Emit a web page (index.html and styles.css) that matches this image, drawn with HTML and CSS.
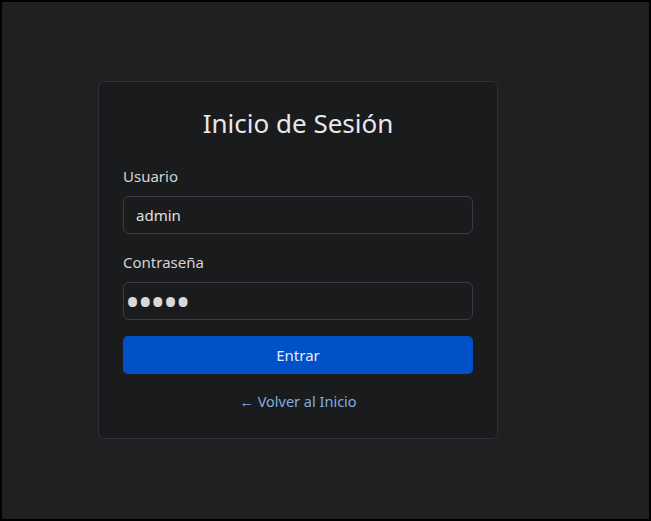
FILE: index.html
```html
<!DOCTYPE html>
<html lang="es">
<head>
  <meta charset="UTF-8" />
  <title>Inicio de Sesión</title>
  <link rel="stylesheet" href="styles.css">
</head>
<body>
  <div id="frame">
    <div class="login-card">
      <h1>Inicio de Sesión</h1>
      <form class="login-form" onsubmit="return false">
        <label for="user">Usuario</label>
        <input id="user" type="text" value="admin">
        <label for="pass">Contraseña</label>
        <input id="pass" type="password" value="admin">
        <button type="submit">Entrar</button>
      </form>
      <a class="back" href="#">&larr; Volver al Inicio</a>
    </div>
  </div>
</body>
</html>
```

FILE: styles.css
```css
body {
  margin: 0;
  background-color: #000;
  font-family: 'Noto Sans', 'Open Sans', sans-serif;
}
#frame {
  box-sizing: border-box;
  width: 100vw;
  height: 100vh;
  border: 2px solid #000;
  background-color: #1f2022;
  padding-top: 79px;
  padding-left: 96px;
}
.login-card {
  box-sizing: border-box;
  width: 400px;
  height: 358px;
  background-color: #1a1b1d;
  border: 1px solid #2f3033;
  border-radius: 6px;
  padding: 22px 24px 0;
  color: #dcdcdc;
}
h1 {
  margin: 0 0 23px;
  font-size: 26px;
  font-weight: 400;
  text-align: center;
  color: #e8e8e8;
  line-height: 38px;
}
.login-form {
  display: flex;
  flex-direction: column;
}
label {
  font-size: 15px;
  color: #d4d4d4;
  line-height: 22px;
  margin-bottom: 9px;
}
input {
  box-sizing: border-box;
  height: 38px;
  background-color: #1a1b1d;
  border: 1px solid #3b3c40;
  border-radius: 6px;
  color: #e0e0e0;
  font-family: inherit;
  font-size: 15px;
  padding: 0 12px;
  margin-bottom: 17px;
}
/* bigger bullets for the masked value */
#pass {
  margin-bottom: 16px;
  padding-left: 1px;
  font-size: 40px;
  letter-spacing: -2.4px;
  color: #d8d8d8;
}
button {
  height: 38px;
  border: none;
  border-radius: 5px;
  background-color: #0050c8;
  color: #e4ecf8;
  font-family: inherit;
  font-size: 15px;
}
.back {
  display: block;
  margin-top: 17px;
  text-align: center;
  font-size: 14.5px;
  color: #7faee0;
  text-decoration: none;
}
```
